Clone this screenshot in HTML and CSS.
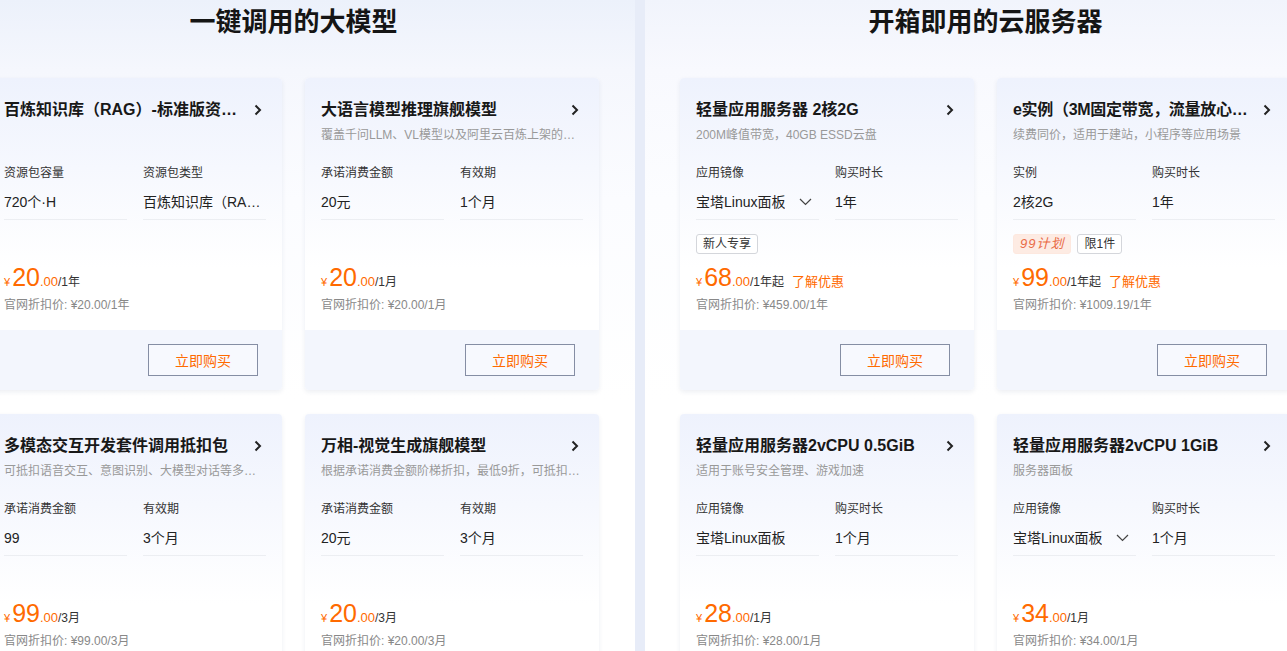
FILE: index.html
```html
<!DOCTYPE html>
<html lang="zh-CN">
<head>
    <meta charset="UTF-8">
    <meta name="viewport" content="width=device-width, initial-scale=1.0">
    <title>产品推荐</title>
    <link rel="stylesheet" href="styles.css">
</head>
<body>

    <div class="page">
        <!-- 大模型 -->
        <section class="section">
            <h2 class="section-title">一键调用的大模型</h2>
            <div class="card-grid">

                <div class="card">
                    <div class="card-body">
                        <div class="card-head">
                            <h3>百炼知识库（RAG）-标准版资源包</h3>
                            <svg class="arrow" width="8" height="12" viewBox="0 0 8 12"><path d="M1.5 1.5L6 6l-4.5 4.5" fill="none" stroke="#222" stroke-width="2"/></svg>
                        </div>
                        <p class="card-desc"></p>
                        <div class="fields">
                            <div class="field">
                                <span class="label">资源包容量</span>
                                <div class="value"><span>720个·H</span></div>
                            </div>
                            <div class="field">
                                <span class="label">资源包类型</span>
                                <div class="value"><span>百炼知识库（RAG）标准版</span></div>
                            </div>
                        </div>
                        <div class="tags"></div>
                        <div class="price"><span class="yen">¥</span><span class="num">20</span><span class="dec">.00</span><span class="unit">/1年</span></div>
                        <div class="origin">官网折扣价: ¥20.00/1年</div>
                    </div>
                    <div class="card-foot"><button class="buy-btn">立即购买</button></div>
                </div>

                <div class="card">
                    <div class="card-body">
                        <div class="card-head">
                            <h3>大语言模型推理旗舰模型</h3>
                            <svg class="arrow" width="8" height="12" viewBox="0 0 8 12"><path d="M1.5 1.5L6 6l-4.5 4.5" fill="none" stroke="#222" stroke-width="2"/></svg>
                        </div>
                        <p class="card-desc">覆盖千问LLM、VL模型以及阿里云百炼上架的第三方模型</p>
                        <div class="fields">
                            <div class="field">
                                <span class="label">承诺消费金额</span>
                                <div class="value"><span>20元</span></div>
                            </div>
                            <div class="field">
                                <span class="label">有效期</span>
                                <div class="value"><span>1个月</span></div>
                            </div>
                        </div>
                        <div class="tags"></div>
                        <div class="price"><span class="yen">¥</span><span class="num">20</span><span class="dec">.00</span><span class="unit">/1月</span></div>
                        <div class="origin">官网折扣价: ¥20.00/1月</div>
                    </div>
                    <div class="card-foot"><button class="buy-btn">立即购买</button></div>
                </div>

                <div class="card">
                    <div class="card-body">
                        <div class="card-head">
                            <h3>多模态交互开发套件调用抵扣包</h3>
                            <svg class="arrow" width="8" height="12" viewBox="0 0 8 12"><path d="M1.5 1.5L6 6l-4.5 4.5" fill="none" stroke="#222" stroke-width="2"/></svg>
                        </div>
                        <p class="card-desc">可抵扣语音交互、意图识别、大模型对话等多种能力调用</p>
                        <div class="fields">
                            <div class="field">
                                <span class="label">承诺消费金额</span>
                                <div class="value"><span>99</span></div>
                            </div>
                            <div class="field">
                                <span class="label">有效期</span>
                                <div class="value"><span>3个月</span></div>
                            </div>
                        </div>
                        <div class="tags"></div>
                        <div class="price"><span class="yen">¥</span><span class="num">99</span><span class="dec">.00</span><span class="unit">/3月</span></div>
                        <div class="origin">官网折扣价: ¥99.00/3月</div>
                    </div>
                    <div class="card-foot"><button class="buy-btn">立即购买</button></div>
                </div>

                <div class="card">
                    <div class="card-body">
                        <div class="card-head">
                            <h3>万相-视觉生成旗舰模型</h3>
                            <svg class="arrow" width="8" height="12" viewBox="0 0 8 12"><path d="M1.5 1.5L6 6l-4.5 4.5" fill="none" stroke="#222" stroke-width="2"/></svg>
                        </div>
                        <p class="card-desc">根据承诺消费金额阶梯折扣，最低9折，可抵扣万相系列模型</p>
                        <div class="fields">
                            <div class="field">
                                <span class="label">承诺消费金额</span>
                                <div class="value"><span>20元</span></div>
                            </div>
                            <div class="field">
                                <span class="label">有效期</span>
                                <div class="value"><span>3个月</span></div>
                            </div>
                        </div>
                        <div class="tags"></div>
                        <div class="price"><span class="yen">¥</span><span class="num">20</span><span class="dec">.00</span><span class="unit">/3月</span></div>
                        <div class="origin">官网折扣价: ¥20.00/3月</div>
                    </div>
                    <div class="card-foot"><button class="buy-btn">立即购买</button></div>
                </div>

            </div>
        </section>

        <div class="divider"></div>

        <!-- 云服务器 -->
        <section class="section">
            <h2 class="section-title">开箱即用的云服务器</h2>
            <div class="card-grid">

                <div class="card">
                    <div class="card-body">
                        <div class="card-head">
                            <h3>轻量应用服务器 2核2G</h3>
                            <svg class="arrow" width="8" height="12" viewBox="0 0 8 12"><path d="M1.5 1.5L6 6l-4.5 4.5" fill="none" stroke="#222" stroke-width="2"/></svg>
                        </div>
                        <p class="card-desc">200M峰值带宽，40GB ESSD云盘</p>
                        <div class="fields">
                            <div class="field">
                                <span class="label">应用镜像</span>
                                <div class="value"><span>宝塔Linux面板</span>
                                    <svg class="caret" width="13" height="8" viewBox="0 0 13 8"><path d="M1 1l5.5 5.5L12 1" fill="none" stroke="#444" stroke-width="1.2"/></svg>
                                </div>
                            </div>
                            <div class="field">
                                <span class="label">购买时长</span>
                                <div class="value"><span>1年</span></div>
                            </div>
                        </div>
                        <div class="tags"><span class="tag">新人专享</span></div>
                        <div class="price"><span class="yen">¥</span><span class="num">68</span><span class="dec">.00</span><span class="unit">/1年起</span><a class="more" href="#">了解优惠</a></div>
                        <div class="origin">官网折扣价: ¥459.00/1年</div>
                    </div>
                    <div class="card-foot"><button class="buy-btn">立即购买</button></div>
                </div>

                <div class="card">
                    <div class="card-body">
                        <div class="card-head">
                            <h3 class="tight">e实例（3M固定带宽，流量放心用）</h3>
                            <svg class="arrow" width="8" height="12" viewBox="0 0 8 12"><path d="M1.5 1.5L6 6l-4.5 4.5" fill="none" stroke="#222" stroke-width="2"/></svg>
                        </div>
                        <p class="card-desc">续费同价，适用于建站，小程序等应用场景</p>
                        <div class="fields">
                            <div class="field">
                                <span class="label">实例</span>
                                <div class="value"><span>2核2G</span></div>
                            </div>
                            <div class="field">
                                <span class="label">购买时长</span>
                                <div class="value"><span>1年</span></div>
                            </div>
                        </div>
                        <div class="tags"><span class="tag tag-hot">99计划</span><span class="tag">限1件</span></div>
                        <div class="price"><span class="yen">¥</span><span class="num">99</span><span class="dec">.00</span><span class="unit">/1年起</span><a class="more" href="#">了解优惠</a></div>
                        <div class="origin">官网折扣价: ¥1009.19/1年</div>
                    </div>
                    <div class="card-foot"><button class="buy-btn">立即购买</button></div>
                </div>

                <div class="card">
                    <div class="card-body">
                        <div class="card-head">
                            <h3>轻量应用服务器2vCPU 0.5GiB</h3>
                            <svg class="arrow" width="8" height="12" viewBox="0 0 8 12"><path d="M1.5 1.5L6 6l-4.5 4.5" fill="none" stroke="#222" stroke-width="2"/></svg>
                        </div>
                        <p class="card-desc">适用于账号安全管理、游戏加速</p>
                        <div class="fields">
                            <div class="field">
                                <span class="label">应用镜像</span>
                                <div class="value"><span>宝塔Linux面板</span></div>
                            </div>
                            <div class="field">
                                <span class="label">购买时长</span>
                                <div class="value"><span>1个月</span></div>
                            </div>
                        </div>
                        <div class="tags"></div>
                        <div class="price"><span class="yen">¥</span><span class="num">28</span><span class="dec">.00</span><span class="unit">/1月</span></div>
                        <div class="origin">官网折扣价: ¥28.00/1月</div>
                    </div>
                    <div class="card-foot"><button class="buy-btn">立即购买</button></div>
                </div>

                <div class="card">
                    <div class="card-body">
                        <div class="card-head">
                            <h3>轻量应用服务器2vCPU 1GiB</h3>
                            <svg class="arrow" width="8" height="12" viewBox="0 0 8 12"><path d="M1.5 1.5L6 6l-4.5 4.5" fill="none" stroke="#222" stroke-width="2"/></svg>
                        </div>
                        <p class="card-desc">服务器面板</p>
                        <div class="fields">
                            <div class="field">
                                <span class="label">应用镜像</span>
                                <div class="value"><span>宝塔Linux面板</span>
                                    <svg class="caret" width="13" height="8" viewBox="0 0 13 8"><path d="M1 1l5.5 5.5L12 1" fill="none" stroke="#444" stroke-width="1.2"/></svg>
                                </div>
                            </div>
                            <div class="field">
                                <span class="label">购买时长</span>
                                <div class="value"><span>1个月</span></div>
                            </div>
                        </div>
                        <div class="tags"></div>
                        <div class="price"><span class="yen">¥</span><span class="num">34</span><span class="dec">.00</span><span class="unit">/1月</span></div>
                        <div class="origin">官网折扣价: ¥34.00/1月</div>
                    </div>
                    <div class="card-foot"><button class="buy-btn">立即购买</button></div>
                </div>

            </div>
        </section>
    </div>

</body>
</html>
```

FILE: styles.css
```css
body {
    margin: 0;
    padding: 0;
    font-family: "Liberation Sans", "Noto Sans CJK SC", sans-serif;
    color: #333;
    background-color: #fff;
    overflow: hidden;
}

.page {
    display: flex;
    margin-left: -48px;
    min-height: 651px;
}

/* Sections */
.section {
    flex: 0 0 683px;
    box-sizing: border-box;
    padding: 4px 36px 0;
    background: linear-gradient(180deg, #ecf1fb 0, #f5f7fd 70px, #fbfcff 200px, #fff 400px);
}

.section:last-child {
    flex: 0 0 682px;
    padding-left: 35px;
    background: linear-gradient(180deg, #f1f4fc 0, #f8f9fe 70px, #fcfdff 200px, #fff 400px);
}

.divider {
    flex: 0 0 10px;
    background-color: #e7ecf8;
}

.section-title {
    margin: 0 0 38px;
    font-size: 26px;
    line-height: 36px;
    font-weight: bold;
    color: #151515;
    text-align: center;
}

.card-grid {
    display: grid;
    grid-template-columns: 294px 294px;
    gap: 24px 23px;
}

/* Card */
.card {
    background-color: #fff;
    border-radius: 4px;
    overflow: hidden;
    box-shadow: 0 2px 5px rgba(30, 50, 100, 0.08);
}

.card-body {
    padding: 20px 16px 16px;
    background: linear-gradient(180deg, #eef2fd 0, #f6f8fe 90px, #fff 190px);
}

.card-head {
    display: flex;
    align-items: center;
}

.card-head h3 {
    flex: 1;
    min-width: 0;
    margin: 0;
    font-size: 16px;
    line-height: 24px;
    font-weight: bold;
    color: #181818;
    white-space: nowrap;
    overflow: hidden;
    text-overflow: ellipsis;
}

.card-head h3.tight {
    letter-spacing: -0.3px;
}

.arrow {
    flex: none;
    margin: 0 4px 0 12px;
}

.card-desc {
    margin: 4px 0 0;
    min-height: 18px;
    font-size: 12px;
    line-height: 18px;
    color: #999;
    white-space: nowrap;
    overflow: hidden;
    text-overflow: ellipsis;
}

.fields {
    display: grid;
    grid-template-columns: 1fr 1fr;
    gap: 16px;
    margin-top: 20px;
}

.field {
    min-width: 0;
}

.label {
    display: block;
    font-size: 12px;
    line-height: 18px;
    color: #333;
}

.value {
    display: flex;
    align-items: center;
    justify-content: space-between;
    margin-top: 10px;
    padding-bottom: 7px;
    border-bottom: 1px solid #eceef2;
    font-size: 14px;
    line-height: 20px;
    color: #222;
}

.value span {
    white-space: nowrap;
    overflow: hidden;
    text-overflow: ellipsis;
}

.caret {
    flex: none;
    margin: 0 7px 0 8px;
}

.tags {
    display: flex;
    gap: 6px;
    height: 20px;
    margin-top: 14px;
}

.tag {
    box-sizing: border-box;
    height: 20px;
    padding: 0 6px;
    border: 1px solid #d4d6db;
    border-radius: 3px;
    background-color: #fff;
    font-size: 12px;
    line-height: 18px;
    color: #333;
}

.tag-hot {
    border-color: #fde8df;
    background-color: #fdebe3;
    color: #e96a46;
    font-size: 13px;
    font-style: italic;
    letter-spacing: 1px;
}

.price {
    margin-top: 9px;
    height: 28px;
    line-height: 28px;
    color: #ff6a00;
    white-space: nowrap;
}

.price .yen {
    font-size: 11px;
    margin-right: 2px;
}

.price .num {
    font-size: 25px;
}

.price .dec {
    font-size: 13px;
}

.price .unit {
    font-size: 12px;
    color: #333;
}

.price .more {
    margin-left: 8px;
    font-size: 13px;
    color: #ff6a00;
    text-decoration: none;
}

.origin {
    margin-top: 5px;
    font-size: 12px;
    line-height: 18px;
    color: #888;
}

.card-foot {
    display: flex;
    justify-content: flex-end;
    padding: 14px 24px;
    background-color: #f3f6fd;
}

.buy-btn {
    width: 110px;
    height: 32px;
    border: 1px solid #858ea4;
    background-color: #f7f9fe;
    font-family: inherit;
    font-size: 14px;
    color: #ff6a00;
    cursor: pointer;
}
```
